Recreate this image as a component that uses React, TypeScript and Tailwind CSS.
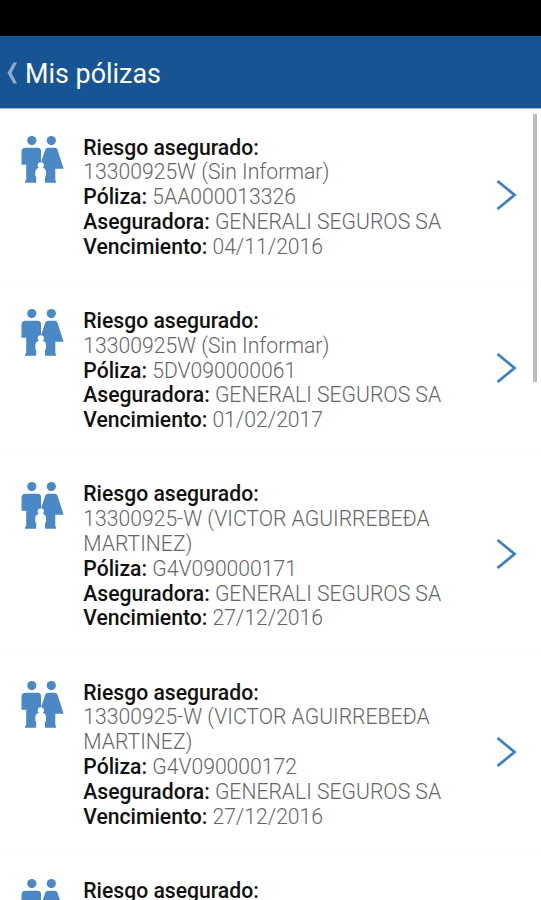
import React from 'react';

const policies = [
  { id: 1, risk: "13300925W (Sin Informar)", number: "5AA000013326", insurer: "GENERALI SEGUROS SA", expires: "04/11/2016" },
  { id: 2, risk: "13300925W (Sin Informar)", number: "5DV090000061", insurer: "GENERALI SEGUROS SA", expires: "01/02/2017" },
  { id: 3, risk: "13300925-W (VICTOR AGUIRREBEĐA MARTINEZ)", number: "G4V090000171", insurer: "GENERALI SEGUROS SA", expires: "27/12/2016" },
  { id: 4, risk: "13300925-W (VICTOR AGUIRREBEĐA MARTINEZ)", number: "G4V090000172", insurer: "GENERALI SEGUROS SA", expires: "27/12/2016" },
];

const FamilyIcon = () => (
  <svg width="44" height="48" viewBox="0 0 44 48" fill="#4a88c6" className="shrink-0">
    {/* Adults */}
    <circle cx="10.8" cy="4.6" r="4.6" />
    <circle cx="30.3" cy="4.6" r="4.6" />
    <path d="M4.5 11.8H17C19 11.8 20 13.2 20 15.2V34H16V44.5C16 46 15.5 46.8 14.5 46.8H4V45.5L5.2 44V28.8H.5V15.8C.5 13.2 2 11.8 4.5 11.8Z" />
    <path d="M27 11.8H34C35.5 11.8 36.2 12.8 36.7 14.2L42.6 32.8H34.3V44L35 45.5V46.8H25C24 46.8 23.5 46 23.5 44.5V34H19.5V28L24 14.2C24.5 12.8 25.5 11.8 27 11.8Z" />
    {/* Child in front */}
    <circle cx="19.8" cy="29.3" r="3.1" fill="#fff" />
    <path d="M17.5 32H22.2C24 32.6 25 34.2 25 36V40.5H24V48H15.2V40.5H14.3V36C14.3 34.2 15.5 32.6 17.5 32Z" fill="#fff" />
  </svg>
);

const Header = () => (
  <header className="flex h-[73px] items-center border-b border-[#a5bdd9] bg-[#175493] pl-[7px] pt-[3px] text-white">
    <svg width="11" height="22" viewBox="0 0 11 22" fill="#8eacce" className="mb-[2px]">
      <path d="M6.5 0.5H10L4.5 11L10 21.5H6.5L0.5 11Z" />
    </svg>
    <h1 className="ml-[7px] text-[26.9px] leading-8">Mis pólizas</h1>
  </header>
);

const Body = () => {
  return (
    <main className="h-[900px] overflow-hidden bg-white font-['Roboto',sans-serif]">
      <div className="h-9 bg-black" />
      <Header />

      <div className="relative">
        {policies.map((policy) => (
          <div key={policy.id} className="flex border-b border-[#fcfcfc] pt-[26.6px] pb-[21.8px] pl-[21px] pr-6">
            <FamilyIcon />
            <div className="ml-[18.3px] w-[370px] text-[21.15px] leading-[24.8px] font-light text-[#666]">
              <p className="font-medium text-[#111]">Riesgo asegurado:</p>
              <p>{policy.risk}</p>
              <p><span className="font-medium text-[#111]">Póliza:</span> {policy.number}</p>
              <p><span className="font-medium text-[#111]">Aseguradora:</span> {policy.insurer}</p>
              <p><span className="font-medium text-[#111]">Vencimiento:</span> {policy.expires}</p>
            </div>
            <svg width="21" height="32" viewBox="0 0 21 32" fill="none" stroke="#3c80c0" strokeWidth="2.8" className="mb-[6px] ml-auto self-center">
              <path d="M1.5 2L18.5 16L1.5 30" />
            </svg>
          </div>
        ))}

        {/* Next row, still mostly below the fold */}
        <div className="flex pt-[26.6px] pl-[21px]">
          <FamilyIcon />
          <p className="ml-[18.3px] text-[21.15px] leading-[24.8px] font-medium text-[#111]">Riesgo asegurado:</p>
        </div>

        {/* Scrollbar */}
        <div className="absolute top-[5px] right-[4px] h-[268px] w-[4px] bg-[#bcbcbc]" />
      </div>
    </main>
  );
};

export default Body;
